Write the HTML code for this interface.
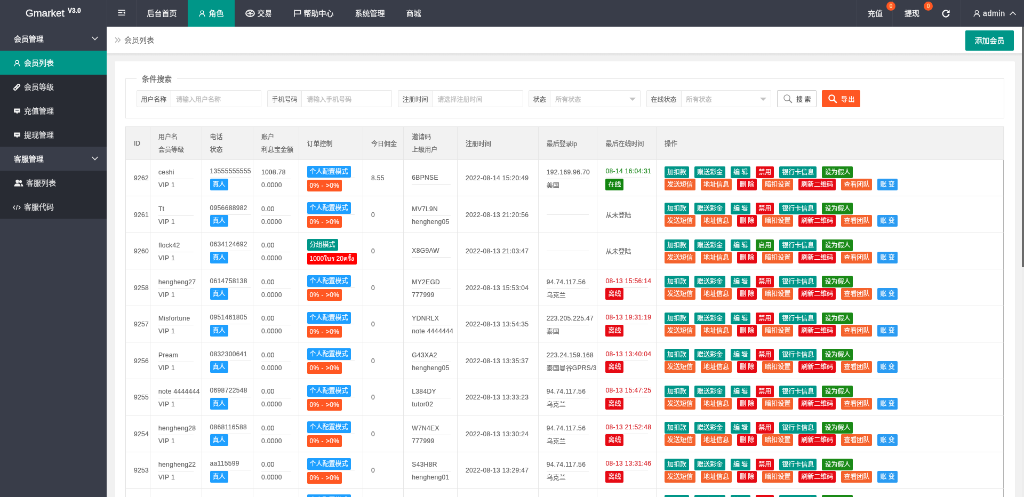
<!DOCTYPE html>
<html lang="zh-CN">
<head>
<meta charset="utf-8">
<title>Gmarket V3.0 - 会员列表</title>
<style>
*{box-sizing:border-box;margin:0;padding:0}
html,body{width:1024px;height:497px;overflow:hidden;background:#f1f1f1}
body{font-family:"Liberation Sans","Noto Sans CJK SC",sans-serif;color:#666;font-size:14px;line-height:1}
a{text-decoration:none;color:inherit}
#stage{position:absolute;left:0;top:0;width:1920px;height:932px;transform:scale(0.533333);transform-origin:0 0;overflow:hidden;background:#f1f1f1;will-change:transform;-webkit-text-stroke:.3px}
svg{display:block}

/* header */
#hd{position:absolute;left:0;top:0;width:1920px;height:50px;background:#393d49;color:#f3f3f3}
#logo{position:absolute;left:0;top:0;width:200px;height:50px;color:#fff}
#logo .g{position:absolute;left:48px;top:13px;font-size:19px;line-height:24px}
#logo .v{position:absolute;left:127px;top:13px;font-size:12px;line-height:14px;font-weight:bold}
.nav{position:absolute;top:0;height:50px;display:flex}
.nav .it{height:50px;line-height:50px;padding:0 20px;font-size:14px;display:flex;align-items:center;white-space:nowrap;border-left:1px solid rgba(255,255,255,.04)}
.nav .it svg{margin-right:6px}
.nav .it.on{background:#009688;color:#fff}
#nl{left:200px}
#nl .it{border-left:0}
#nl .it.sq{width:55.5px;padding:0;justify-content:center;border-left:1px solid rgba(255,255,255,.05);border-right:1px solid rgba(255,255,255,.05)}
.bdg{position:absolute;top:3px;width:17px;height:17px;border-radius:9px;background:#ff5722;color:#ffe9a8;font-size:10px;line-height:17px;text-align:center}

/* sidebar */
#sd{position:absolute;left:0;top:50px;width:200px;height:882px;background:#393d49;color:rgba(255,255,255,.78)}
#sd .it{position:relative;height:45px;line-height:43px;font-size:14px;padding-left:24px;padding-top:2px;display:flex;align-items:center;white-space:nowrap}
#sd .it.grp{padding-left:26px;color:#fff;background:#393d49}
#sd .it.ch{background:#282b33}
#sd .it.on{background:#009688;color:#fff}
#sd .it svg{margin-right:6px}
#sd .it .car{position:absolute;left:171px;top:17px;margin:0}

/* top bar */
#tb{position:absolute;left:200px;top:50px;width:1720px;height:50px;background:#fff;box-shadow:0 1px 2px rgba(0,0,0,.14)}
#tb .bc{position:absolute;left:14px;top:0;height:50px;line-height:50px;font-size:14px;color:#606060;-webkit-text-stroke:.1px;display:flex;align-items:center}
#tb .bc svg{margin-right:5px}
#add{position:absolute;left:1610px;top:7px;width:91px;height:38px;line-height:38px;background:#009688;color:#fff;font-size:14px;text-align:center;border-radius:2px}
#sh{position:absolute;left:200px;top:100px;width:1720px;height:5px;background:linear-gradient(#dcdcdc,#e6e6e6 45%,#f0f0f0)}
#sb{position:absolute;left:1916px;top:50px;width:4px;height:882px;background:#ededed}
#sb i{position:absolute;left:0;top:0;width:4px;height:451px;background:#6a6a6a}

/* card */
#card{position:absolute;left:215px;top:115px;width:1687.5px;height:900px;background:#fff;border-radius:2px;box-shadow:0 1px 2px rgba(0,0,0,.05)}
#fs{position:absolute;left:20px;top:32px;width:1647.5px;height:75px;border:1px solid #e6e6e6}
#fs .lg{position:absolute;left:20px;top:-9px;height:18px;line-height:18px;padding:0 10px;background:#fff;font-size:14px;color:#666}
.grp-in{position:absolute;top:21px;height:32px;display:flex;font-size:12px}
.grp-in .lb{height:32px;line-height:30px;padding-top:1.8px;border:1px solid #e6e6e6;background:#fbfbfb;color:#606060;-webkit-text-stroke:.12px;text-align:center;border-radius:2px 0 0 2px}
.grp-in .ip{height:32px;line-height:30px;padding-top:1.8px;border:1px solid #e6e6e6;border-left:0;padding-left:9px;color:#bbb;position:relative;border-radius:0 2px 2px 0;background:#fff}
.grp-in .ip b{position:absolute;right:8px;top:13px;width:0;height:0;border:6px solid transparent;border-top-color:#c2c2c2;border-bottom:0}
.btn-s{position:absolute;top:21px;height:32px;line-height:30px;font-size:12px;display:flex;align-items:center;border-radius:2px}
.btn-s svg{margin-right:7px}
.dn{position:relative;top:1.6px}

/* table */
#tbl{position:absolute;left:20px;top:121.7px;width:1647.5px;border-left:1px solid #e2e2e2;border-top:1px solid #e6e6e6;font-size:12px;color:#646464;-webkit-text-stroke:.22px}
.tr{display:flex;height:68.5px;border-bottom:1px solid #e6e6e6;background:#fff}
.tr.th{height:62.2px;background:#f2f2f2;color:#646464}
.td{border-right:1px solid #e6e6e6;padding:0 0 0 15px;display:block;overflow:visible;white-space:nowrap;flex:none;letter-spacing:.36px}
.td.c9{overflow:hidden}
.td .l{display:block;height:23px;line-height:23px}
.td .lb{display:flex;align-items:center;height:23px;letter-spacing:0}
.cj{letter-spacing:0;position:relative;top:1.2px}
.th .td{letter-spacing:0}
.th .td .l{height:23.5px;line-height:23.5px}
.th .td.h2{padding-top:8.8px}
.th .td.h1{padding-top:21.3px}
.th .td.hL{padding-top:20.1px}
.hr{display:block;height:1px;background:#e6e6e6;margin-right:15px}
.tA{padding-top:12.4px}
.tB{padding-top:10.3px}
.tC{padding-top:10.3px}
.tC .hr{margin-bottom:2.1px}
.tD{padding-top:11.3px}
.tE{padding-top:23.4px}
.tF{padding-top:33.4px}
.tG{padding-top:22.6px}
.c1{width:46px}.c2{width:96.5px}.c3{width:96.5px}.c4{width:85.5px}.c5{width:120.5px}.c6{width:76.3px}.c7{width:100.7px}.c8{width:151.7px}.c9{width:110.8px}.c10{width:110.5px}.c11{width:651.5px;border-right:1px solid #b0b0b0}
.th .c11{border-right-color:#e6e6e6}
.c3 .hr{margin-right:4px}.c7 .hr{margin-right:12px}
.bd{display:inline-block;height:22px;line-height:22px;padding:0 5px;border-radius:2px;color:#fff;font-size:12px;letter-spacing:0}
.bd.n{letter-spacing:.45px}
.b-blue{background:#1e9fff}.b-or{background:#ff5722}.b-teal{background:#009688}.b-red{background:#f00}.b-red2{background:#e60a14}.b-green{background:#12850f}
.bt{display:inline-block;height:22px;line-height:22px;padding:0 5px;border-radius:2px;color:#fff;font-size:12px;margin-right:10px}
.bt.t{background:#009688}.bt.r{background:#e60a14}.bt.g{background:#1a8a17}.bt.o{background:#f4622c}.bt.b{background:#2a9bf2}
</style>
</head>
<body>
<div id="stage">

<div id="card">
  <div id="fs">
    <div class="lg">条件搜索</div>
    <div class="grp-in" style="left:19.5px"><div class="lb" style="width:65.5px">用户名称</div><div class="ip" style="width:169px">请输入用户名称</div></div>
    <div class="grp-in" style="left:264.7px"><div class="lb" style="width:65.5px">手机号码</div><div class="ip" style="width:169px">请输入手机号码</div></div>
    <div class="grp-in" style="left:510px"><div class="lb" style="width:65.5px">注册时间</div><div class="ip" style="width:169px">请选择注册时间</div></div>
    <div class="grp-in" style="left:755.3px"><div class="lb" style="width:41px">状态</div><div class="ip" style="width:169px">所有状态<b></b></div></div>
    <div class="grp-in" style="left:975.5px"><div class="lb" style="width:66px">在线状态</div><div class="ip" style="width:168px">所有状态<b></b></div></div>
    <a class="btn-s" style="left:1221px;width:74px;border:1px solid #c9c9c9;background:#fff;color:#555;padding-left:10px">
      <svg width="18" height="18" viewBox="0 0 18 18"><circle cx="7.5" cy="7.5" r="5.6" fill="none" stroke="#888" stroke-width="1.2"/><path d="M11.6 11.6L16.4 16.4" stroke="#888" stroke-width="1.8" stroke-linecap="round"/></svg><span class="dn">搜 索</span></a>
    <a class="btn-s" style="left:1305px;width:72px;background:#ff5722;color:#fff;padding-left:11px">
      <svg width="18" height="18" viewBox="0 0 18 18"><circle cx="7.5" cy="7.5" r="5.2" fill="none" stroke="#fff" stroke-width="2.2"/><path d="M11.6 11.6L16 16" stroke="#fff" stroke-width="2.6" stroke-linecap="round"/></svg><span class="dn" style="letter-spacing:1.5px">导出</span></a>
  </div>

  <div id="tbl">
    <div class="tr th">
      <div class="td c1 hL"><div class="l">ID</div></div>
      <div class="td c2 h2"><div class="l">用户名</div><div class="l">会员等级</div></div>
      <div class="td c3 h2"><div class="l">电话</div><div class="l">状态</div></div>
      <div class="td c4 h2"><div class="l">账户</div><div class="l">利息宝金额</div></div>
      <div class="td c5 h1"><div class="l">订单控制</div></div>
      <div class="td c6 h1"><div class="l">今日佣金</div></div>
      <div class="td c7 h2"><div class="l">邀请码</div><div class="l">上级用户</div></div>
      <div class="td c8 h1"><div class="l">注册时间</div></div>
      <div class="td c9 h1"><div class="l">最后登录ip</div></div>
      <div class="td c10 h1"><div class="l">最后在线时间</div></div>
      <div class="td c11 h1"><div class="l">操作</div></div>
    </div>
<div class="tr">
<div class="td c1 tE"><div class="l">9262</div></div>
<div class="td c2 tA"><div class="l">ceshi</div><i class="hr"></i><div class="l">VIP 1</div></div>
<div class="td c3 tB"><div class="l">13555555555</div><i class="hr"></i><div class="lb"><span class="bd b-blue">真人</span></div></div>
<div class="td c4 tA"><div class="l">1008.78</div><i class="hr"></i><div class="l">0.0000</div></div>
<div class="td c5 tC"><div class="lb"><span class="bd b-blue">个人配置模式</span></div><i class="hr"></i><div class="lb"><span class="bd b-or n">0% - &gt;0%</span></div></div>
<div class="td c6 tE"><div class="l">8.55</div></div>
<div class="td c7 tG"><div class="l">6BPNSE</div><i class="hr"></i></div>
<div class="td c8 tE"><div class="l">2022-08-14 15:20:49</div></div>
<div class="td c9 tA"><div class="l">192.169.96.70</div><i class="hr"></i><div class="l"><span class="cj">美国</span></div></div>
<div class="td c10 tB"><div class="l" style="color:#228b22">08-14 16:04:31</div><i class="hr"></i><div class="lb"><span class="bd b-green">在线</span></div></div>
<div class="td c11 tD"><div class="lb"><a class="bt t">加扣款</a><a class="bt t">赠送彩金</a><a class="bt t">编 辑</a><a class="bt r">禁用</a><a class="bt t">银行卡信息</a><a class="bt g">设为假人</a></div><div class="lb"><a class="bt o">发送短信</a><a class="bt o">地址信息</a><a class="bt r">删 除</a><a class="bt o">暗扣设置</a><a class="bt r">刷新二维码</a><a class="bt o">查看团队</a><a class="bt b">账 变</a></div></div>
</div>
<div class="tr">
<div class="td c1 tE"><div class="l">9261</div></div>
<div class="td c2 tA"><div class="l">Tt</div><i class="hr"></i><div class="l">VIP 1</div></div>
<div class="td c3 tB"><div class="l">0956688982</div><i class="hr"></i><div class="lb"><span class="bd b-blue">真人</span></div></div>
<div class="td c4 tA"><div class="l">0.00</div><i class="hr"></i><div class="l">0.0000</div></div>
<div class="td c5 tC"><div class="lb"><span class="bd b-blue">个人配置模式</span></div><i class="hr"></i><div class="lb"><span class="bd b-or n">0% - &gt;0%</span></div></div>
<div class="td c6 tE"><div class="l">0</div></div>
<div class="td c7 tA"><div class="l">MV7L9N</div><i class="hr"></i><div class="l">hengheng05</div></div>
<div class="td c8 tE"><div class="l">2022-08-13 21:20:56</div></div>
<div class="td c9 tF"><i class="hr"></i></div>
<div class="td c10 tE"><div class="l"><span class="cj">从未登陆</span></div></div>
<div class="td c11 tD"><div class="lb"><a class="bt t">加扣款</a><a class="bt t">赠送彩金</a><a class="bt t">编 辑</a><a class="bt r">禁用</a><a class="bt t">银行卡信息</a><a class="bt g">设为假人</a></div><div class="lb"><a class="bt o">发送短信</a><a class="bt o">地址信息</a><a class="bt r">删 除</a><a class="bt o">暗扣设置</a><a class="bt r">刷新二维码</a><a class="bt o">查看团队</a><a class="bt b">账 变</a></div></div>
</div>
<div class="tr">
<div class="td c1 tE"><div class="l">9260</div></div>
<div class="td c2 tA"><div class="l">flock42</div><i class="hr"></i><div class="l">VIP 1</div></div>
<div class="td c3 tB"><div class="l">0634124692</div><i class="hr"></i><div class="lb"><span class="bd b-blue">真人</span></div></div>
<div class="td c4 tA"><div class="l">0.00</div><i class="hr"></i><div class="l">0.0000</div></div>
<div class="td c5 tC"><div class="lb"><span class="bd b-teal">分组模式</span></div><i class="hr"></i><div class="lb"><span class="bd b-red">1000ใบร 20ครั้ง</span></div></div>
<div class="td c6 tE"><div class="l">0</div></div>
<div class="td c7 tG"><div class="l">X8G9AW</div><i class="hr"></i></div>
<div class="td c8 tE"><div class="l">2022-08-13 21:03:47</div></div>
<div class="td c9 tF"><i class="hr"></i></div>
<div class="td c10 tE"><div class="l"><span class="cj">从未登陆</span></div></div>
<div class="td c11 tD"><div class="lb"><a class="bt t">加扣款</a><a class="bt t">赠送彩金</a><a class="bt t">编 辑</a><a class="bt g">启用</a><a class="bt t">银行卡信息</a><a class="bt g">设为假人</a></div><div class="lb"><a class="bt o">发送短信</a><a class="bt o">地址信息</a><a class="bt r">删 除</a><a class="bt o">暗扣设置</a><a class="bt r">刷新二维码</a><a class="bt o">查看团队</a><a class="bt b">账 变</a></div></div>
</div>
<div class="tr">
<div class="td c1 tE"><div class="l">9258</div></div>
<div class="td c2 tA"><div class="l">hengheng27</div><i class="hr"></i><div class="l">VIP 1</div></div>
<div class="td c3 tB"><div class="l">0614758138</div><i class="hr"></i><div class="lb"><span class="bd b-blue">真人</span></div></div>
<div class="td c4 tA"><div class="l">0.00</div><i class="hr"></i><div class="l">0.0000</div></div>
<div class="td c5 tC"><div class="lb"><span class="bd b-blue">个人配置模式</span></div><i class="hr"></i><div class="lb"><span class="bd b-or n">0% - &gt;0%</span></div></div>
<div class="td c6 tE"><div class="l">0</div></div>
<div class="td c7 tA"><div class="l">MY2EGD</div><i class="hr"></i><div class="l">777999</div></div>
<div class="td c8 tE"><div class="l">2022-08-13 15:53:04</div></div>
<div class="td c9 tA"><div class="l">94.74.117.56</div><i class="hr"></i><div class="l"><span class="cj">乌克兰</span></div></div>
<div class="td c10 tB"><div class="l" style="color:#d9262c">08-13 15:56:14</div><i class="hr"></i><div class="lb"><span class="bd b-red2">离线</span></div></div>
<div class="td c11 tD"><div class="lb"><a class="bt t">加扣款</a><a class="bt t">赠送彩金</a><a class="bt t">编 辑</a><a class="bt r">禁用</a><a class="bt t">银行卡信息</a><a class="bt g">设为假人</a></div><div class="lb"><a class="bt o">发送短信</a><a class="bt o">地址信息</a><a class="bt r">删 除</a><a class="bt o">暗扣设置</a><a class="bt r">刷新二维码</a><a class="bt o">查看团队</a><a class="bt b">账 变</a></div></div>
</div>
<div class="tr">
<div class="td c1 tE"><div class="l">9257</div></div>
<div class="td c2 tA"><div class="l">Misfortune</div><i class="hr"></i><div class="l">VIP 1</div></div>
<div class="td c3 tB"><div class="l">0951461805</div><i class="hr"></i><div class="lb"><span class="bd b-blue">真人</span></div></div>
<div class="td c4 tA"><div class="l">0.00</div><i class="hr"></i><div class="l">0.0000</div></div>
<div class="td c5 tC"><div class="lb"><span class="bd b-blue">个人配置模式</span></div><i class="hr"></i><div class="lb"><span class="bd b-or n">0% - &gt;0%</span></div></div>
<div class="td c6 tE"><div class="l">0</div></div>
<div class="td c7 tA"><div class="l">YDNRLX</div><i class="hr"></i><div class="l">note 4444444</div></div>
<div class="td c8 tE"><div class="l">2022-08-13 13:54:35</div></div>
<div class="td c9 tA"><div class="l">223.205.225.47</div><i class="hr"></i><div class="l"><span class="cj">泰国</span></div></div>
<div class="td c10 tB"><div class="l" style="color:#d9262c">08-13 19:31:19</div><i class="hr"></i><div class="lb"><span class="bd b-red2">离线</span></div></div>
<div class="td c11 tD"><div class="lb"><a class="bt t">加扣款</a><a class="bt t">赠送彩金</a><a class="bt t">编 辑</a><a class="bt r">禁用</a><a class="bt t">银行卡信息</a><a class="bt g">设为假人</a></div><div class="lb"><a class="bt o">发送短信</a><a class="bt o">地址信息</a><a class="bt r">删 除</a><a class="bt o">暗扣设置</a><a class="bt r">刷新二维码</a><a class="bt o">查看团队</a><a class="bt b">账 变</a></div></div>
</div>
<div class="tr">
<div class="td c1 tE"><div class="l">9256</div></div>
<div class="td c2 tA"><div class="l">Pream</div><i class="hr"></i><div class="l">VIP 1</div></div>
<div class="td c3 tB"><div class="l">0832300641</div><i class="hr"></i><div class="lb"><span class="bd b-blue">真人</span></div></div>
<div class="td c4 tA"><div class="l">0.00</div><i class="hr"></i><div class="l">0.0000</div></div>
<div class="td c5 tC"><div class="lb"><span class="bd b-blue">个人配置模式</span></div><i class="hr"></i><div class="lb"><span class="bd b-or n">0% - &gt;0%</span></div></div>
<div class="td c6 tE"><div class="l">0</div></div>
<div class="td c7 tA"><div class="l">G43XA2</div><i class="hr"></i><div class="l">hengheng05</div></div>
<div class="td c8 tE"><div class="l">2022-08-13 13:35:37</div></div>
<div class="td c9 tA"><div class="l">223.24.159.168</div><i class="hr"></i><div class="l"><span class="cj">泰国曼谷</span>GPRS/3G</div></div>
<div class="td c10 tB"><div class="l" style="color:#d9262c">08-13 13:40:04</div><i class="hr"></i><div class="lb"><span class="bd b-red2">离线</span></div></div>
<div class="td c11 tD"><div class="lb"><a class="bt t">加扣款</a><a class="bt t">赠送彩金</a><a class="bt t">编 辑</a><a class="bt r">禁用</a><a class="bt t">银行卡信息</a><a class="bt g">设为假人</a></div><div class="lb"><a class="bt o">发送短信</a><a class="bt o">地址信息</a><a class="bt r">删 除</a><a class="bt o">暗扣设置</a><a class="bt r">刷新二维码</a><a class="bt o">查看团队</a><a class="bt b">账 变</a></div></div>
</div>
<div class="tr">
<div class="td c1 tE"><div class="l">9255</div></div>
<div class="td c2 tA"><div class="l">note 4444444</div><i class="hr"></i><div class="l">VIP 1</div></div>
<div class="td c3 tB"><div class="l">0698722548</div><i class="hr"></i><div class="lb"><span class="bd b-blue">真人</span></div></div>
<div class="td c4 tA"><div class="l">0.00</div><i class="hr"></i><div class="l">0.0000</div></div>
<div class="td c5 tC"><div class="lb"><span class="bd b-blue">个人配置模式</span></div><i class="hr"></i><div class="lb"><span class="bd b-or n">0% - &gt;0%</span></div></div>
<div class="td c6 tE"><div class="l">0</div></div>
<div class="td c7 tA"><div class="l">L384DY</div><i class="hr"></i><div class="l">tutor02</div></div>
<div class="td c8 tE"><div class="l">2022-08-13 13:33:23</div></div>
<div class="td c9 tA"><div class="l">94.74.117.56</div><i class="hr"></i><div class="l"><span class="cj">乌克兰</span></div></div>
<div class="td c10 tB"><div class="l" style="color:#d9262c">08-13 15:47:25</div><i class="hr"></i><div class="lb"><span class="bd b-red2">离线</span></div></div>
<div class="td c11 tD"><div class="lb"><a class="bt t">加扣款</a><a class="bt t">赠送彩金</a><a class="bt t">编 辑</a><a class="bt r">禁用</a><a class="bt t">银行卡信息</a><a class="bt g">设为假人</a></div><div class="lb"><a class="bt o">发送短信</a><a class="bt o">地址信息</a><a class="bt r">删 除</a><a class="bt o">暗扣设置</a><a class="bt r">刷新二维码</a><a class="bt o">查看团队</a><a class="bt b">账 变</a></div></div>
</div>
<div class="tr">
<div class="td c1 tE"><div class="l">9254</div></div>
<div class="td c2 tA"><div class="l">hengheng28</div><i class="hr"></i><div class="l">VIP 1</div></div>
<div class="td c3 tB"><div class="l">0868116588</div><i class="hr"></i><div class="lb"><span class="bd b-blue">真人</span></div></div>
<div class="td c4 tA"><div class="l">0.00</div><i class="hr"></i><div class="l">0.0000</div></div>
<div class="td c5 tC"><div class="lb"><span class="bd b-blue">个人配置模式</span></div><i class="hr"></i><div class="lb"><span class="bd b-or n">0% - &gt;0%</span></div></div>
<div class="td c6 tE"><div class="l">0</div></div>
<div class="td c7 tA"><div class="l">W7N4EX</div><i class="hr"></i><div class="l">777999</div></div>
<div class="td c8 tE"><div class="l">2022-08-13 13:30:24</div></div>
<div class="td c9 tA"><div class="l">94.74.117.56</div><i class="hr"></i><div class="l"><span class="cj">乌克兰</span></div></div>
<div class="td c10 tB"><div class="l" style="color:#d9262c">08-13 21:52:48</div><i class="hr"></i><div class="lb"><span class="bd b-red2">离线</span></div></div>
<div class="td c11 tD"><div class="lb"><a class="bt t">加扣款</a><a class="bt t">赠送彩金</a><a class="bt t">编 辑</a><a class="bt r">禁用</a><a class="bt t">银行卡信息</a><a class="bt g">设为假人</a></div><div class="lb"><a class="bt o">发送短信</a><a class="bt o">地址信息</a><a class="bt r">删 除</a><a class="bt o">暗扣设置</a><a class="bt r">刷新二维码</a><a class="bt o">查看团队</a><a class="bt b">账 变</a></div></div>
</div>
<div class="tr">
<div class="td c1 tE"><div class="l">9253</div></div>
<div class="td c2 tA"><div class="l">hengheng22</div><i class="hr"></i><div class="l">VIP 1</div></div>
<div class="td c3 tB"><div class="l">aa115599</div><i class="hr"></i><div class="lb"><span class="bd b-blue">真人</span></div></div>
<div class="td c4 tA"><div class="l">0.00</div><i class="hr"></i><div class="l">0.0000</div></div>
<div class="td c5 tC"><div class="lb"><span class="bd b-blue">个人配置模式</span></div><i class="hr"></i><div class="lb"><span class="bd b-or n">0% - &gt;0%</span></div></div>
<div class="td c6 tE"><div class="l">0</div></div>
<div class="td c7 tA"><div class="l">S43H8R</div><i class="hr"></i><div class="l">hengheng01</div></div>
<div class="td c8 tE"><div class="l">2022-08-13 13:29:47</div></div>
<div class="td c9 tA"><div class="l">94.74.117.56</div><i class="hr"></i><div class="l"><span class="cj">乌克兰</span></div></div>
<div class="td c10 tB"><div class="l" style="color:#d9262c">08-13 13:31:46</div><i class="hr"></i><div class="lb"><span class="bd b-red2">离线</span></div></div>
<div class="td c11 tD"><div class="lb"><a class="bt t">加扣款</a><a class="bt t">赠送彩金</a><a class="bt t">编 辑</a><a class="bt r">禁用</a><a class="bt t">银行卡信息</a><a class="bt g">设为假人</a></div><div class="lb"><a class="bt o">发送短信</a><a class="bt o">地址信息</a><a class="bt r">删 除</a><a class="bt o">暗扣设置</a><a class="bt r">刷新二维码</a><a class="bt o">查看团队</a><a class="bt b">账 变</a></div></div>
</div>
<div class="tr">
<div class="td c1 tE"><div class="l">9252</div></div>
<div class="td c2 tA"><div class="l">hengheng21</div><i class="hr"></i><div class="l">VIP 1</div></div>
<div class="td c3 tB"><div class="l">0812345678</div><i class="hr"></i><div class="lb"><span class="bd b-blue">真人</span></div></div>
<div class="td c4 tA"><div class="l">0.00</div><i class="hr"></i><div class="l">0.0000</div></div>
<div class="td c5 tC"><div class="lb"><span class="bd b-blue">个人配置模式</span></div><i class="hr"></i><div class="lb"><span class="bd b-or n">0% - &gt;0%</span></div></div>
<div class="td c6 tE"><div class="l">0</div></div>
<div class="td c7 tA"><div class="l">K2M8QA</div><i class="hr"></i><div class="l">hengheng01</div></div>
<div class="td c8 tE"><div class="l">2022-08-13 13:20:11</div></div>
<div class="td c9 tA"><div class="l">94.74.117.56</div><i class="hr"></i><div class="l"><span class="cj">乌克兰</span></div></div>
<div class="td c10 tB"><div class="l" style="color:#d9262c">08-13 13:25:02</div><i class="hr"></i><div class="lb"><span class="bd b-red2">离线</span></div></div>
<div class="td c11 tD"><div class="lb"><a class="bt t">加扣款</a><a class="bt t">赠送彩金</a><a class="bt t">编 辑</a><a class="bt r">禁用</a><a class="bt t">银行卡信息</a><a class="bt g">设为假人</a></div><div class="lb"><a class="bt o">发送短信</a><a class="bt o">地址信息</a><a class="bt r">删 除</a><a class="bt o">暗扣设置</a><a class="bt r">刷新二维码</a><a class="bt o">查看团队</a><a class="bt b">账 变</a></div></div>
</div>
  </div>
</div>

<div id="tb">
  <div class="bc"><svg width="14" height="14" viewBox="0 0 14 14"><path d="M2 2.5L6.5 7L2 11.5M7 2.5L11.5 7L7 11.5" fill="none" stroke="#999" stroke-width="1.1"/></svg>会员列表</div>
  <a id="add">添加会员</a>
</div>
<div id="sh"></div>
<div id="sb"><i></i></div>

<div id="sd">
  <div class="it grp">会员管理<svg class="car" width="14" height="10" viewBox="0 0 14 10"><path d="M1.5 2L7 7.5L12.5 2" fill="none" stroke="#e8e8e8" stroke-width="1.6"/></svg></div>
  <div class="it ch on"><svg width="12" height="13" viewBox="0 0 14 15" style="margin:0 7px 0 2px"><circle cx="7" cy="4.6" r="3.4" fill="none" stroke="#fff" stroke-width="1.4"/><path d="M1.2 14.2C1.4 10.6 3.6 8.6 7 8.6S12.6 10.6 12.8 14.2" fill="none" stroke="#fff" stroke-width="1.4"/></svg>会员列表</div>
  <div class="it ch"><svg width="15" height="15" viewBox="0 0 15 15"><path d="M4.300 10.700L10.700 4.300" stroke="#eee" stroke-width="6.400" stroke-linecap="round"/><circle cx="4.600" cy="10.400" r="1.350" fill="#282b33"/><circle cx="10.400" cy="4.600" r="1.350" fill="#282b33"/><path d="M6.200 8.800L8.800 6.200" stroke="#282b33" stroke-width="1"/></svg>会员等级</div>
  <div class="it ch"><svg width="12" height="13" viewBox="0 0 12 13" style="margin:0 7px 0 2px"><rect x="0" y="1.500" width="12" height="7.600" rx="1" fill="#eee"/><path d="M4.200 9L6 11.800L7.800 9z" fill="#eee"/><path d="M3 5.300H9" stroke="#555a66" stroke-width="1.200"/></svg>充值管理</div>
  <div class="it ch"><svg width="12" height="13" viewBox="0 0 12 13" style="margin:0 7px 0 2px"><rect x="0" y="1.500" width="12" height="7.600" rx="1" fill="#eee"/><path d="M4.200 9L6 11.800L7.800 9z" fill="#eee"/><path d="M3 5.300H9" stroke="#555a66" stroke-width="1.200"/></svg>提现管理</div>
  <div class="it grp">客服管理<svg class="car" width="14" height="10" viewBox="0 0 14 10"><path d="M1.5 2L7 7.5L12.5 2" fill="none" stroke="#e8e8e8" stroke-width="1.6"/></svg></div>
  <div class="it ch" style="padding-left:26px"><svg width="18" height="15" viewBox="0 0 18 15" style="margin-right:5px"><circle cx="6.5" cy="4" r="3.2" fill="#eee"/><path d="M0.5 13.5C0.7 9.8 3 8 6.5 8S12.300 9.8 12.5 13.5z" fill="#eee"/><circle cx="12.5" cy="4.4" r="2.6" fill="#eee"/><path d="M13 8.2C15.8 8.4 17.3 10 17.500 13.500H13.800C13.700 11.200 13.500 9.500 12.600 8.300z" fill="#eee"/></svg>客服列表</div>
  <div class="it ch"><svg width="15" height="12" viewBox="0 0 15 12"><path d="M4 2.500L1 6L4 9.500M11 2.500L14 6L11 9.500M8.600 1.500L6.400 10.500" fill="none" stroke="#eee" stroke-width="1.3"/></svg>客服代码</div>
</div>

<div id="hd">
  <div id="logo"><span class="g">Gmarket</span><span class="v">V3.0</span></div>
  <div class="nav" id="nl">
    <div class="it sq"><svg width="14" height="11.500" viewBox="0 0 15 13" preserveAspectRatio="none" style="margin:-2px 0 0 0"><path d="M0.500 1.500H14.500M0.500 6.500H9M0.500 11.500H14.500" stroke="#fff" stroke-width="1.8" fill="none"/><path d="M14.500 3.800V9.200L11 6.500z" fill="#fff"/></svg></div>
    <div class="it">后台首页</div>
    <div class="it on"><svg width="12" height="13" viewBox="0 0 14 15" style="margin:0 7px 0 1px"><circle cx="7" cy="4.6" r="3.4" fill="none" stroke="#fff" stroke-width="1.4"/><path d="M1.2 14.2C1.4 10.6 3.6 8.6 7 8.6S12.6 10.6 12.8 14.2" fill="none" stroke="#fff" stroke-width="1.4"/></svg>角色</div>
    <div class="it"><svg width="18" height="14" viewBox="0 0 18 14" style="margin:-1px 5px 0 0"><ellipse cx="9" cy="7" rx="7.900" ry="5.900" fill="none" stroke="#f3f3f3" stroke-width="2.100"/><path d="M6.200 3.200L9 6.400L11.800 3.200M9 6V11.400M3.800 7.600H14.200" fill="none" stroke="#f3f3f3" stroke-width="1.600"/></svg>交易</div>
    <div class="it"><svg width="14" height="14" viewBox="0 0 14 14" style="margin:-1px 5px 0 0"><path d="M1 0.500V13.500" stroke="#f3f3f3" stroke-width="1.700"/><path d="M1.800 1.600H12.600V8.200H1.800" fill="none" stroke="#f3f3f3" stroke-width="1.600"/></svg>帮助中心</div>
    <div class="it">系统管理</div>
    <div class="it">商城</div>
  </div>

  <div class="nav" style="left:1605px">
    <div class="it" style="width:68px;padding:0 0 0 21px;position:relative">充值<span class="bdg" style="left:56px">0</span></div>
    <div class="it" style="width:69px;padding:0 0 0 22px;position:relative">提现<span class="bdg" style="left:58px">0</span></div>
    <div class="it" style="width:58px;padding:0 0 0 23px;border-left:0"><svg width="17" height="17" viewBox="0 0 17 17"><path d="M13.600 5.200A6 6 0 1 0 14.500 9.500" fill="none" stroke="#fff" stroke-width="2.200"/><path d="M15.600 1.600V7H10.200z" fill="#fff"/></svg></div>
    <div class="it" style="padding:0 0 0 24px"><svg width="13" height="15" viewBox="0 0 14 15" style="margin-right:5px"><circle cx="7" cy="4.600" r="3.400" fill="none" stroke="#f3f3f3" stroke-width="1.400"/><path d="M1.200 14.200C1.400 10.600 3.600 8.600 7 8.600S12.600 10.600 12.800 14.200" fill="none" stroke="#f3f3f3" stroke-width="1.400"/></svg><span style="letter-spacing:.7px">admin</span><svg width="14" height="10" viewBox="0 0 14 10" style="margin:0 0 0 7px"><path d="M1.500 8L7 2.500L12.500 8" fill="none" stroke="#e8e8e8" stroke-width="1.600"/></svg></div>
  </div>
</div>

</div>
</body>
</html>
